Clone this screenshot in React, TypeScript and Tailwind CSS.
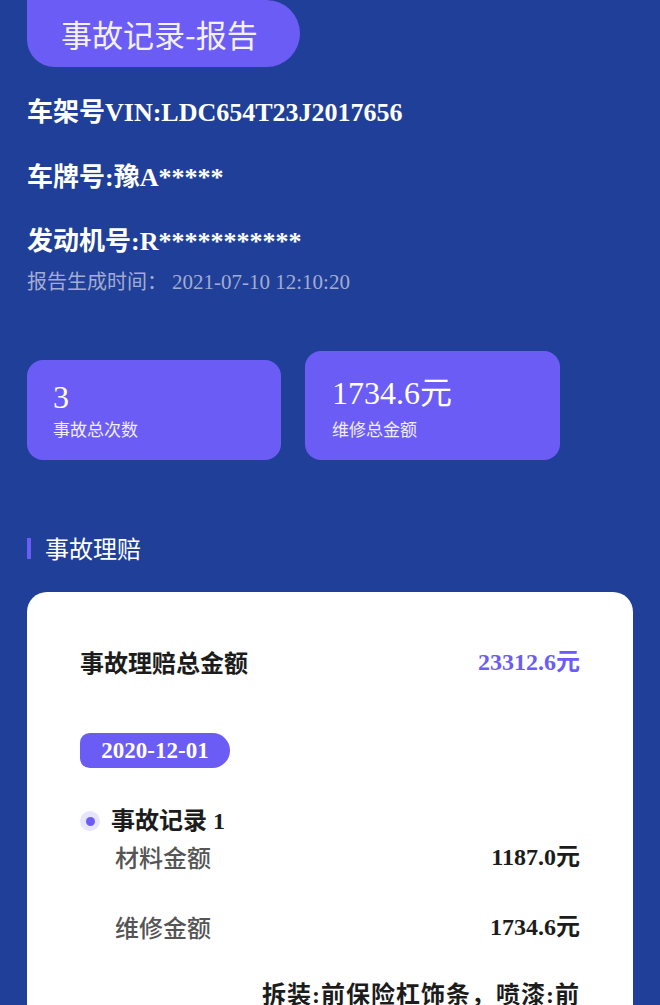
import React from "react";

const mix = { fontFamily: '"Liberation Serif", "Noto Sans CJK SC", serif' };
const sans = { fontFamily: '"Noto Sans CJK SC", "Noto Sans", sans-serif' };

export default function App() {
  return (
    <div className="min-h-[1005px] w-[660px] overflow-hidden bg-[#1f3f98] px-[27px]" style={sans}>
      <div className="flex h-[67px] w-[273px] items-center justify-center rounded-bl-[28px] rounded-r-[34px] bg-[#6c5cf6] pr-[8px]">
        <span className="text-[31px] leading-[40px] text-[#f3f1ff]">事故记录-报告</span>
      </div>

      <div className="mt-[28px] text-[26px] font-bold leading-[36px] text-white" style={mix}>
        车架号VIN:LDC654T23J2017656
      </div>
      <div className="mt-[29px] text-[26px] font-bold leading-[36px] text-white" style={mix}>
        车牌号:豫A*****
      </div>
      <div className="mt-[28px] text-[26px] font-bold leading-[36px] text-white" style={mix}>
        发动机号:R***********
      </div>
      <div className="mt-[8px] text-[20px] leading-[28px] text-[#a3acd2]" style={mix}>
        报告生成时间： <span className="text-[21px]">2021-07-10 12:10:20</span>
      </div>

      <div className="mt-[55px] flex items-end gap-[24px]">
        <div className="h-[100px] w-[254px] rounded-[16px] bg-[#6c5cf6] pl-[26px] pt-[20px]">
          <div className="text-[32px] leading-[34px] text-white" style={mix}>3</div>
          <div className="mt-[3px] text-[17px] leading-[24px] text-[#efedff]">事故总次数</div>
        </div>
        <div className="h-[109px] w-[255px] rounded-[16px] bg-[#6c5cf6] pl-[27px] pt-[25px]">
          <div className="text-[32px] leading-[34px] text-white" style={mix}>1734.6元</div>
          <div className="mt-[7px] text-[17px] leading-[24px] text-[#efedff]">维修总金额</div>
        </div>
      </div>

      <div className="mt-[72px] flex h-[32px] items-center gap-[14px]">
        <div className="h-[21px] w-[4px] bg-[#6c5cf6]" />
        <span className="text-[24px] leading-[32px] text-white">事故理赔</span>
      </div>

      <div className="mt-[28px] h-[460px] rounded-[20px] bg-white px-[53px] pt-[50px]">
        <div className="flex h-[40px] items-center justify-between">
          <span className="text-[24px] font-semibold text-[#1c1c1c]">事故理赔总金额</span>
          <span className="text-[24px] font-bold text-[#6c5cf6]" style={mix}>23312.6元</span>
        </div>

        <div className="mt-[51px] flex h-[35px] w-[150px] items-center justify-center rounded-l-[10px] rounded-r-[18px] bg-[#6c5cf6]">
          <span className="text-[23px] font-bold leading-[30px] text-white" style={mix}>2020-12-01</span>
        </div>

        <div className="mt-[36px] flex h-[34px] items-center">
          <div className="flex h-[20px] w-[20px] items-center justify-center rounded-full bg-[#e7e4fd]">
            <div className="h-[9px] w-[9px] rounded-full bg-[#6c5cf6]" />
          </div>
          <span className="ml-[11px] text-[24px] font-semibold leading-[34px] text-[#1c1c1c]" style={mix}>事故记录 1</span>
        </div>

        <div className="ml-[35px]">
          <div className="mt-[2px] flex h-[34px] items-center justify-between">
            <span className="text-[24px] font-medium text-[#555555]">材料金额</span>
            <span className="text-[24px] font-bold text-[#1c1c1c]" style={mix}>1187.0元</span>
          </div>
          <div className="mt-[36px] flex h-[34px] items-center justify-between">
            <span className="text-[24px] font-medium text-[#555555]">维修金额</span>
            <span className="text-[24px] font-bold text-[#1c1c1c]" style={mix}>1734.6元</span>
          </div>
          <div className="mt-[34px] flex items-end justify-between">
            <span className="text-[24px] leading-[34px] font-medium text-[#555555]">维修项目</span>
            <span className="w-[322px] text-right text-[24px] font-bold leading-[34px] tracking-[1px] text-[#1c1c1c]" style={mix}>
              拆装:前保险杠饰条，喷漆:前保险杠，拆装:前大灯
            </span>
          </div>
        </div>
      </div>
    </div>
  );
}
